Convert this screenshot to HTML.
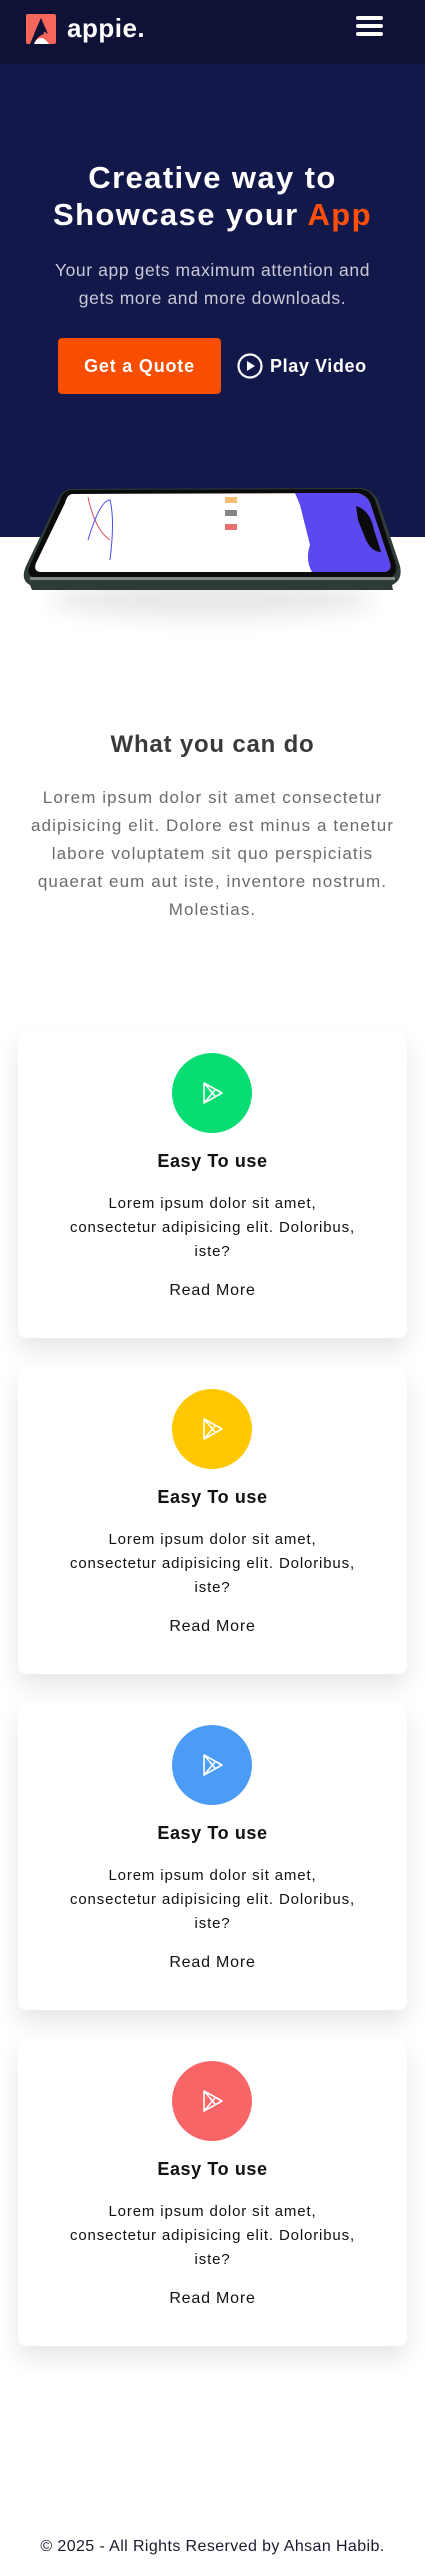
<!DOCTYPE html>
<html><head><meta charset="utf-8"><style>
*{margin:0;padding:0;box-sizing:border-box}
body{width:425px;height:2569px;background:#fff;font-family:"Liberation Sans",sans-serif;position:relative;overflow:hidden}
.hdr{position:absolute;left:0;top:0;width:425px;height:64px;background:#0f1236}
.hero{position:absolute;left:0;top:64px;width:425px;height:473px;background:#13184b}
.abs{position:absolute}
.c{text-align:center;left:0;width:425px}
.card{position:absolute;left:18px;width:389px;height:307px;background:#fff;border-radius:8px;box-shadow:0 12px 24px rgba(0,0,0,.10)}
.circ{position:absolute;left:154px;top:22px;width:80px;height:80px;border-radius:50%}
.circ svg{position:absolute;left:29px;top:28px}
.ct{position:absolute;top:120px;left:0;width:389px;text-align:center;font-weight:bold;font-size:18px;color:#111;letter-spacing:.6px}
.cd{position:absolute;top:161px;left:0;width:389px;text-align:center;font-size:15px;line-height:24px;color:#111;letter-spacing:.85px;white-space:nowrap}
.rm{position:absolute;top:251px;left:0;width:389px;text-align:center;font-size:16px;color:#111;letter-spacing:.8px}
</style></head><body>
<div class="hdr">
 <svg class="abs" style="left:26px;top:14px" width="30" height="30" viewBox="0 0 30 30">
  <rect width="30" height="30" rx="2" fill="#f7665a"/>
  <path d="M15 4 L22 20 Q15 14 8 20 Z" fill="#0f1236"/>
  <path d="M7 30 Q15 18 23 30 Z" fill="#fff"/>
  <path d="M15 4 L4 30 L8 30 Q11 22 18 20 Z" fill="#0f1236"/>
 </svg>
 <div class="abs" style="left:67px;top:13px;font-size:26px;font-weight:bold;color:#fff;letter-spacing:.5px">appie.</div>
 <div class="abs" style="left:356px;top:16px;width:27px;height:4px;background:#fff;border-radius:2px"></div>
 <div class="abs" style="left:356px;top:24px;width:27px;height:4px;background:#fff;border-radius:2px"></div>
 <div class="abs" style="left:356px;top:32px;width:27px;height:4px;background:#fff;border-radius:2px"></div>
</div>
<div class="hero"></div>
<div class="abs c" style="top:159px;font-size:31px;font-weight:bold;color:#fff;line-height:37px;letter-spacing:1.4px">Creative way to<br>Showcase your <span style="color:#ff4f0a">App</span></div>
<div class="abs c" style="top:256px;font-size:17.5px;color:#c9c9d6;line-height:28px;letter-spacing:.6px">Your app gets maximum attention and<br>gets more and more downloads.</div>
<div class="abs" style="left:58px;top:338px;width:163px;height:56px;background:#f94d00;border-radius:4px;color:#fff;font-weight:bold;font-size:18px;text-align:center;line-height:56px;letter-spacing:.8px">Get a Quote</div>
<svg class="abs" style="left:237px;top:353px" width="26" height="26" viewBox="0 0 26 26"><circle cx="13" cy="13" r="11.5" fill="none" stroke="#fff" stroke-width="2.2"/><path d="M10 8 L18 13 L10 18 Z" fill="#fff"/></svg>
<div class="abs" style="left:270px;top:353px;font-size:18px;font-weight:bold;color:#fff;line-height:26px;letter-spacing:.6px">Play Video</div>
<!-- phone -->
<div class="abs" style="left:50px;top:582px;width:325px;height:36px;border-radius:50%;background:rgba(0,0,0,.09);filter:blur(10px)"></div>
<svg class="abs" style="left:0;top:480px" width="425" height="120" viewBox="0 480 425 120">
 <path d="M70 489 L360 488 Q372 489 378 500 L400 566 Q403 580 392 585 L393 590 L32 590 L30 585 Q20 580 26 566 L58 500 Q62 490 70 489 Z" fill="#2f3b36"/>
 <path d="M70 490 L360 489 Q370 490 375 500 L396 565 Q398 576 388 578 L36 578 Q25 576 30 565 L60 500 Q63 491 70 490 Z" fill="#0b0b0b"/>
 <path d="M72 494 L356 493 Q366 494 370 503 L390 563 Q392 571 384 572 L40 572 Q33 571 36 563 L65 503 Q67 495 72 494 Z" fill="#fff"/>
 <path d="M295 493 L356 493 Q366 494 370 503 L390 563 Q392 571 384 572 L312 572 Q305 560 310 545 L300 505 Z" fill="#5b48f0"/>
 <path d="M356 506 Q370 510 374 530 L381 552 Q372 552 366 540 L358 520 Z" fill="#0b0b0b"/>
 <path d="M282 500 Q290 498 292 505 L305 558 Q305 563 298 562 L290 562 Z" fill="#fff"/>
 <path d="M88 497 Q95 530 110 540" stroke="#e05060" stroke-width="1" fill="none"/>
 <path d="M88 540 Q100 500 110 500 Q115 520 110 560" stroke="#4a4af0" stroke-width="1" fill="none"/>
 <rect x="225" y="497" width="12" height="6" fill="#f0a030" opacity=".7"/>
 <rect x="225" y="510" width="12" height="6" fill="#333" opacity=".6"/>
 <rect x="225" y="524" width="12" height="6" fill="#e03030" opacity=".7"/>
 <rect x="30" y="577" width="365" height="3" fill="#7f8a86"/>
</svg>
<div class="abs c" style="top:731px;font-size:24px;font-weight:bold;color:#3a3a3a;letter-spacing:.8px">What you can do</div>
<div class="abs c" style="top:784px;font-size:17px;line-height:28px;color:#6b6b6b;letter-spacing:1.1px;white-space:nowrap">Lorem ipsum dolor sit amet consectetur<br>adipisicing elit. Dolore est minus a tenetur<br>labore voluptatem sit quo perspiciatis<br>quaerat eum aut iste, inventore nostrum.<br>Molestias.</div>

<div class="card" style="top:1031px"><div class="circ" style="background:#08dd74"><svg width="24" height="24" viewBox="0 0 24 24" fill="none" stroke="#fff" stroke-width="1.6" stroke-linejoin="round"><path d="M3 2 L21 12 L3 22 Z"/><path d="M3 2 L14 15 M3 22 L14 9"/></svg></div><div class="ct">Easy To use</div><div class="cd">Lorem ipsum dolor sit amet,<br>consectetur adipisicing elit. Doloribus,<br>iste?</div><div class="rm">Read More</div></div>
<div class="card" style="top:1367px"><div class="circ" style="background:#ffc800"><svg width="24" height="24" viewBox="0 0 24 24" fill="none" stroke="#fff" stroke-width="1.6" stroke-linejoin="round"><path d="M3 2 L21 12 L3 22 Z"/><path d="M3 2 L14 15 M3 22 L14 9"/></svg></div><div class="ct">Easy To use</div><div class="cd">Lorem ipsum dolor sit amet,<br>consectetur adipisicing elit. Doloribus,<br>iste?</div><div class="rm">Read More</div></div>
<div class="card" style="top:1703px"><div class="circ" style="background:#4b9cf7"><svg width="24" height="24" viewBox="0 0 24 24" fill="none" stroke="#fff" stroke-width="1.6" stroke-linejoin="round"><path d="M3 2 L21 12 L3 22 Z"/><path d="M3 2 L14 15 M3 22 L14 9"/></svg></div><div class="ct">Easy To use</div><div class="cd">Lorem ipsum dolor sit amet,<br>consectetur adipisicing elit. Doloribus,<br>iste?</div><div class="rm">Read More</div></div>
<div class="card" style="top:2039px"><div class="circ" style="background:#f86567"><svg width="24" height="24" viewBox="0 0 24 24" fill="none" stroke="#fff" stroke-width="1.6" stroke-linejoin="round"><path d="M3 2 L21 12 L3 22 Z"/><path d="M3 2 L14 15 M3 22 L14 9"/></svg></div><div class="ct">Easy To use</div><div class="cd">Lorem ipsum dolor sit amet,<br>consectetur adipisicing elit. Doloribus,<br>iste?</div><div class="rm">Read More</div></div>

<div class="abs c" style="top:2538px;font-size:16px;color:#1a1a2e;letter-spacing:.4px">© 2025 - All Rights Reserved by Ahsan Habib.</div>
</body></html>
